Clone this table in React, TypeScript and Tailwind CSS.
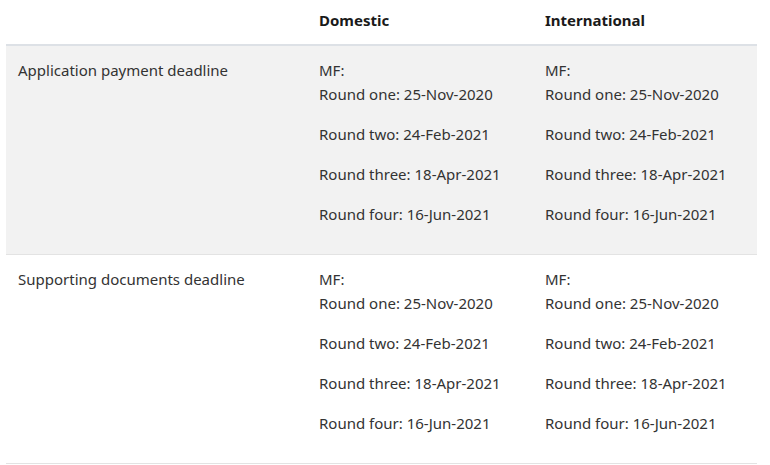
const rounds = [
  "Round one: 25-Nov-2020",
  "Round two: 24-Feb-2021",
  "Round three: 18-Apr-2021",
  "Round four: 16-Jun-2021",
];

const rows = [
  { label: "Application payment deadline", shaded: true },
  { label: "Supporting documents deadline", shaded: false },
];

function Dates() {
  return (
    <div>
      <p className="mb-4">
        MF:
        <br />
        {rounds[0]}
      </p>
      {rounds.slice(1).map((r) => (
        <p key={r} className="mb-4">
          {r}
        </p>
      ))}
    </div>
  );
}

export default function App() {
  return (
    <div
      className="min-h-[465px] w-[770px] bg-white pl-[6px] pr-[13px] text-[15px] leading-[24px] text-[#333]"
      style={{ fontFamily: '"Noto Sans", "Open Sans", sans-serif' }}
    >
      <div className="grid grid-cols-[301px_226px_1fr] border-b-2 border-[#dde1e6] pb-[12px] pt-[8px] font-bold text-[#1a1a1a]">
        <div />
        <div className="px-3">Domestic</div>
        <div className="px-3">International</div>
      </div>
      {rows.map((row) => (
        <div
          key={row.label}
          className={`grid grid-cols-[301px_226px_1fr] border-b border-[#e3e3e3] pt-[12px] pb-[12px] ${
            row.shaded ? "bg-[#f2f2f2]" : "bg-white"
          }`}
        >
          <div className="px-3">{row.label}</div>
          <div className="px-3">
            <Dates />
          </div>
          <div className="px-3">
            <Dates />
          </div>
        </div>
      ))}
    </div>
  );
}
